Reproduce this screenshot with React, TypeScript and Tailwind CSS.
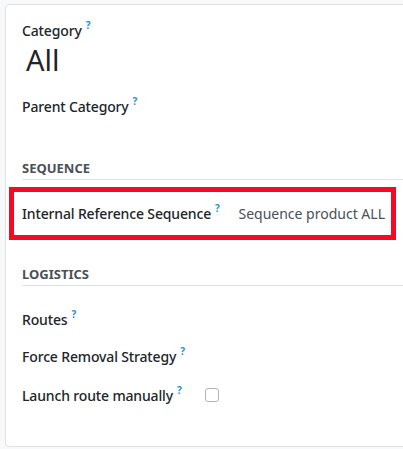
import React from "react";

function Help() {
  return (
    <sup className="ml-[4px] text-[10px] font-bold text-[#1f93c9] top-[-7px]">?</sup>
  );
}

function Label({ text }: { text: string }) {
  return (
    <span className="text-[14px] font-medium tracking-[-0.15px] text-[#212529] whitespace-nowrap">
      {text}
      <Help />
    </span>
  );
}

function SectionTitle({ text }: { text: string }) {
  return (
    <div className="h-[22px] flex items-center border-b border-[#dee2e6] text-[13px] font-bold text-[#495057] uppercase">
      {text}
    </div>
  );
}

export default function App() {
  return (
    <div
      className="w-[403px] h-[449px] overflow-hidden bg-[#f8f9fa] pt-[4px] pl-[5px]"
      style={{ fontFamily: '"Noto Sans", "Open Sans", sans-serif' }}
    >
      <div className="w-[420px] h-[443px] bg-white border border-[#dee2e6] rounded-tl-[4px] rounded-bl-[4px] pl-[16px]">
        {/* Category */}
        <div className="h-[20px] mt-[15px] flex items-center">
          <Label text="Category" />
        </div>
        <div className="h-[38px] flex items-center pl-[4px]">
          <span className="text-[29px] text-[#212529] leading-none">All</span>
        </div>
        <div className="h-[20px] mt-[18px] flex items-center">
          <Label text="Parent Category" />
        </div>

        {/* Sequence */}
        <div className="mt-[42px]">
          <SectionTitle text="Sequence" />
        </div>
        <div className="mt-[7px] ml-[-13px] w-[387px] h-[53px] border-[5px] border-[#f50a23] flex items-center pl-[8px]">
          <Label text="Internal Reference Sequence" />
          <span className="ml-[auto] mr-[6px] text-[14px] text-[#495057] whitespace-nowrap">
            Sequence product ALL
          </span>
        </div>

        {/* Logistics */}
        <div className="mt-[24px]">
          <SectionTitle text="Logistics" />
        </div>
        <div className="h-[20px] mt-[23px] flex items-center">
          <Label text="Routes" />
        </div>
        <div className="h-[20px] mt-[17px] flex items-center">
          <Label text="Force Removal Strategy" />
        </div>
        <div className="h-[20px] mt-[19px] flex items-center">
          <div className="w-[183px]">
            <Label text="Launch route manually" />
          </div>
          <span className="w-[14px] h-[14px] rounded-[3px] border border-[#adb5bd] bg-white" />
        </div>
      </div>
    </div>
  );
}
